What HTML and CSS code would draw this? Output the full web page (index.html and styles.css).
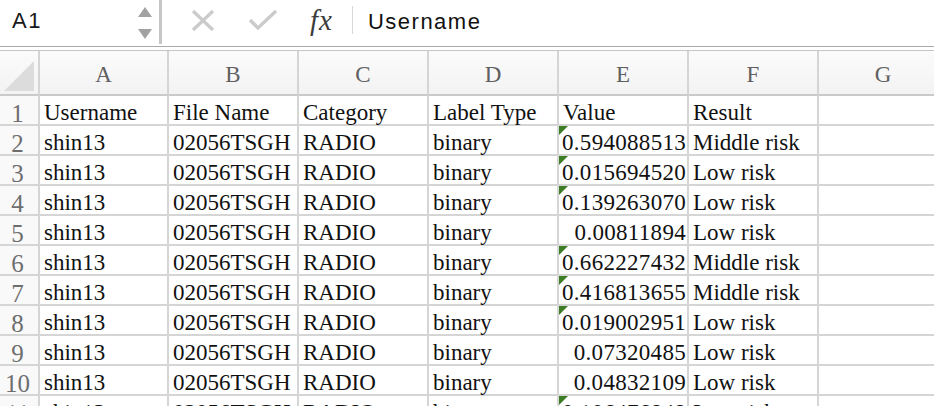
FILE: index.html
```html
<!DOCTYPE html>
<html>
<head>
<meta charset="utf-8">
<link rel="stylesheet" href="styles.css">
</head>
<body>
<div class="formula">
  <div class="namebox">
    <span class="ref">A1</span>
    <span class="spin">
      <svg width="16" height="34" viewBox="0 0 16 34"><polygon points="8,2 15,12 1,12" fill="#a2a2a2"/><polygon points="1,24 15,24 8,34" fill="#a2a2a2"/></svg>
    </span>
  </div>
  <div class="tools">
    <svg class="ico x" width="26" height="24" viewBox="0 0 26 24"><path d="M3 2 L23 21 M23 2 L3 21" stroke="#cbcbcb" stroke-width="3.2" fill="none"/></svg>
    <svg class="ico chk" width="30" height="24" viewBox="0 0 30 24"><path d="M2 11 L10 19 L28 2" stroke="#cbcbcb" stroke-width="3.4" fill="none"/></svg>
    <span class="fx">fx</span>
    <span class="sep"></span>
  </div>
  <div class="input">Username</div>
</div>
<div class="gapline"></div>
<div class="sheet">
  <div class="hd corner"><svg width="36" height="36" viewBox="0 0 36 36"><polygon points="4,33 34,3 34,33" fill="#dcdcdc"/></svg></div>
  <div class="hd">A</div><div class="hd">B</div><div class="hd">C</div><div class="hd">D</div><div class="hd">E</div><div class="hd">F</div><div class="hd">G</div>

  <div class="rn">1</div><div class="c">Username</div><div class="c">File Name</div><div class="c">Category</div><div class="c">Label Type</div><div class="c">Value</div><div class="c">Result</div><div class="c"></div>
  <div class="rn">2</div><div class="c">shin13</div><div class="c">02056TSGH</div><div class="c">RADIO</div><div class="c">binary</div><div class="c num txt">0.594088513</div><div class="c">Middle risk</div><div class="c"></div>
  <div class="rn">3</div><div class="c">shin13</div><div class="c">02056TSGH</div><div class="c">RADIO</div><div class="c">binary</div><div class="c num txt">0.015694520</div><div class="c">Low risk</div><div class="c"></div>
  <div class="rn">4</div><div class="c">shin13</div><div class="c">02056TSGH</div><div class="c">RADIO</div><div class="c">binary</div><div class="c num txt">0.139263070</div><div class="c">Low risk</div><div class="c"></div>
  <div class="rn">5</div><div class="c">shin13</div><div class="c">02056TSGH</div><div class="c">RADIO</div><div class="c">binary</div><div class="c num right">0.00811894</div><div class="c">Low risk</div><div class="c"></div>
  <div class="rn">6</div><div class="c">shin13</div><div class="c">02056TSGH</div><div class="c">RADIO</div><div class="c">binary</div><div class="c num txt">0.662227432</div><div class="c">Middle risk</div><div class="c"></div>
  <div class="rn">7</div><div class="c">shin13</div><div class="c">02056TSGH</div><div class="c">RADIO</div><div class="c">binary</div><div class="c num txt">0.416813655</div><div class="c">Middle risk</div><div class="c"></div>
  <div class="rn">8</div><div class="c">shin13</div><div class="c">02056TSGH</div><div class="c">RADIO</div><div class="c">binary</div><div class="c num txt">0.019002951</div><div class="c">Low risk</div><div class="c"></div>
  <div class="rn">9</div><div class="c">shin13</div><div class="c">02056TSGH</div><div class="c">RADIO</div><div class="c">binary</div><div class="c num right">0.07320485</div><div class="c">Low risk</div><div class="c"></div>
  <div class="rn">10</div><div class="c">shin13</div><div class="c">02056TSGH</div><div class="c">RADIO</div><div class="c">binary</div><div class="c num right">0.04832109</div><div class="c">Low risk</div><div class="c"></div>
  <div class="rn">11</div><div class="c">shin13</div><div class="c">02056TSGH</div><div class="c">RADIO</div><div class="c">binary</div><div class="c num txt">0.106476848</div><div class="c">Low risk</div><div class="c"></div>
</div>
</body>
</html>
```
FILE: styles.css
```css
html, body {
  margin: 0;
  padding: 0;
  background: #ffffff;
  overflow: hidden;
  width: 934px;
  height: 406px;
}
.formula {
  height: 46px;
  border-bottom: 1px solid #a9a9a9;
  display: flex;
  align-items: stretch;
  background: #ffffff;
  font-family: "Liberation Sans", Arial, sans-serif;
}
.namebox {
  width: 162px;
  border-right: 3px solid #c6c6c6;
  box-sizing: border-box;
  display: flex;
  align-items: center;
  justify-content: space-between;
  padding: 0 6px 2px 12px;
  height: 44px;
  flex: none;
}
.ref {
  font-size: 22px;
  letter-spacing: 1.5px;
  color: #1a1a1a;
}
.spin {
  display: flex;
  padding-top: 2px;
}
.tools {
  display: flex;
  align-items: center;
  padding-left: 28px;
  height: 44px;
}
.ico { display: block; margin-top: -2px; }
.x { margin-right: 32px; }
.chk { margin-right: 32px; }
.fx {
  font-family: "Liberation Serif", "Times New Roman", serif;
  font-style: italic;
  font-size: 29px;
  color: #3c3c3c;
  margin-top: -4px;
  letter-spacing: 1px;
}
.sep {
  width: 1px;
  height: 28px;
  background: #d8d8d8;
  margin-left: 19px;
  margin-top: -4px;
}
.input {
  flex: 1;
  display: flex;
  align-items: center;
  padding-left: 15px;
  padding-bottom: 3px;
  font-size: 22px;
  letter-spacing: 1.5px;
  color: #111;
}
.gapline {
  height: 3px;
  border-bottom: 1px solid #c6c6c6;
  background: #ffffff;
}
.sheet {
  display: grid;
  grid-template-columns: 40px 129px 130px 130px 130px 130px 130px 130px;
  grid-auto-rows: 30px;
  grid-template-rows: 45px;
  font-family: "Liberation Serif", "Times New Roman", serif;
}
.sheet > div {
  box-sizing: border-box;
  border-right: 2px solid #d5d5d5;
  border-bottom: 2px solid #d5d5d5;
  white-space: nowrap;
  overflow: visible;
}
.hd {
  background: linear-gradient(#fbfbfb, #f3f3f3);
  color: #606060;
  font-size: 23px;
  line-height: 20px;
  padding-top: 14px;
  text-align: center;
  border-bottom-color: #cacaca !important;
}
.corner {
  padding: 0 !important;
  position: relative;
}
.corner svg {
  position: absolute;
  left: 0;
  top: 7px;
}
.rn {
  background: #f9f9f9;
  color: #6e6e6e;
  font-size: 25px;
  line-height: 20px;
  padding-top: 8px;
  padding-right: 3px;
  text-align: center;
}
.c {
  font-size: 23px;
  line-height: 20px;
  padding-top: 7px;
  padding-left: 4px;
  color: #111;
  background: #fff;
}
.num {
  letter-spacing: 0.3px;
  position: relative;
}
.right {
  text-align: right;
  padding-left: 0;
  padding-right: 1px;
}
.txt {
  padding-left: 3px;
}
.txt::before {
  content: "";
  position: absolute;
  left: 0;
  top: 0;
  border-top: 9px solid #3c7d25;
  border-right: 9px solid transparent;
}
```
